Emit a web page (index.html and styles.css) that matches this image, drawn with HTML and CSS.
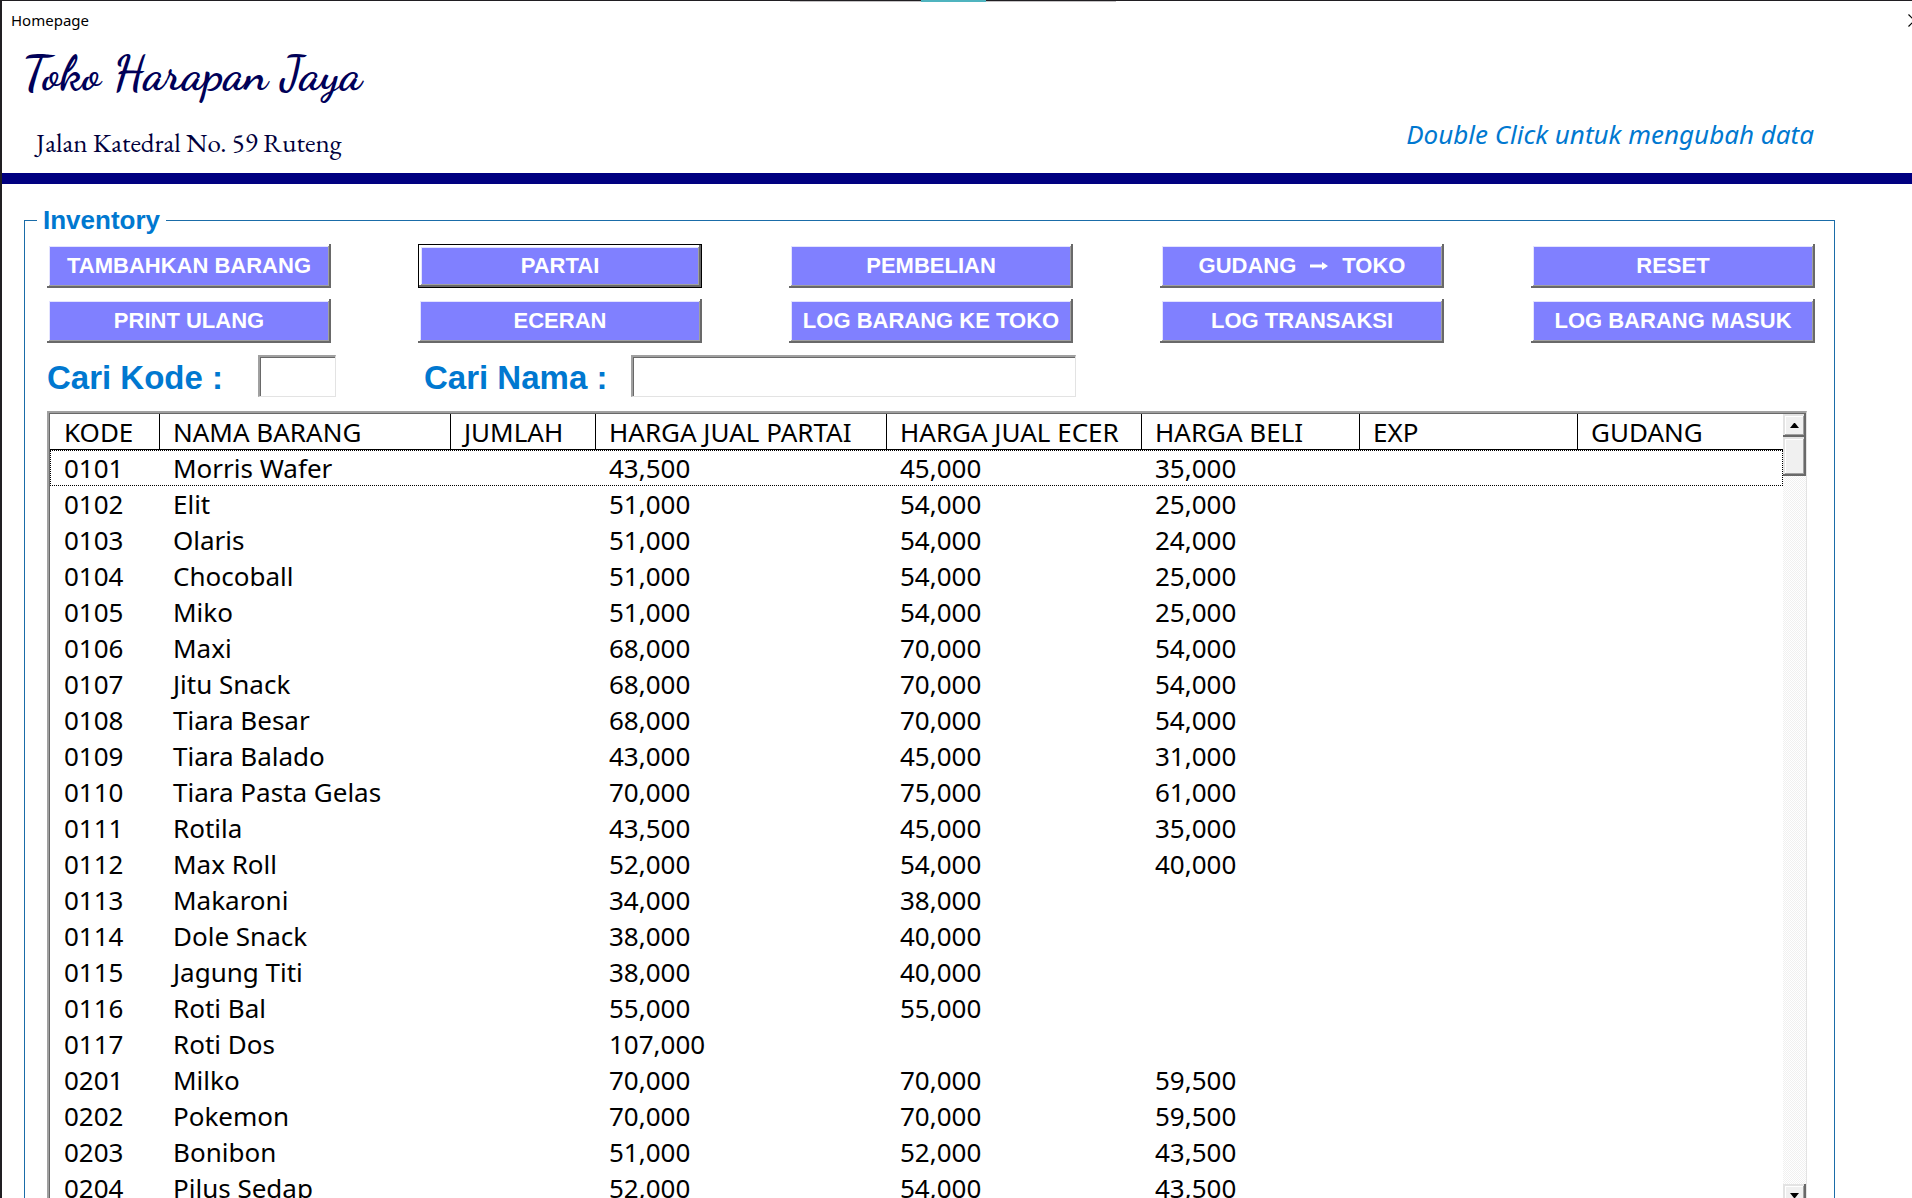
FILE: index.html
```html
<!DOCTYPE html>
<html lang="id">
<head>
<meta charset="utf-8">
<title>Homepage</title>
<link rel="stylesheet" href="styles.css">
</head>
<body>
<div class="window">
  <div class="edge" aria-hidden="true"><div class="edge-panel"><div class="edge-tab"></div></div></div>
  <div class="titlebar">
    <span>Homepage</span>
    <button class="close" type="button" aria-label="Tutup"><svg width="13" height="13" viewBox="0 0 13 13"><path d="M0.500 0.500 12.500 12.500M12.500 0.500 0.500 12.500" fill="none" stroke="#000" stroke-width="1.200"/></svg></button>
  </div>
  <header class="header">
    <div class="brand">
      <h1 class="brand-name">Toko Harapan Jaya</h1>
      <p class="brand-address">Jalan Katedral No. 59 Ruteng</p>
    </div>
    <p class="hint">Double Click untuk mengubah data</p>
  </header>

  <fieldset class="inventory">
    <legend>Inventory</legend>
    <div class="actions">
      <button type="button">TAMBAHKAN BARANG</button>
      <button type="button" class="is-default">PARTAI</button>
      <button type="button">PEMBELIAN</button>
      <button type="button">GUDANG <svg class="arrow" width="18" height="8" viewBox="0 0 18 8" role="img" aria-label="ke"><path d="M0 2.500h12V0l6 4-6 4V5.500H0z" fill="#fff"/></svg> TOKO</button>
      <button type="button">RESET</button>
      <button type="button">PRINT ULANG</button>
      <button type="button">ECERAN</button>
      <button type="button">LOG BARANG KE TOKO</button>
      <button type="button">LOG TRANSAKSI</button>
      <button type="button">LOG BARANG MASUK</button>
    </div>
    <div class="search">
      <div class="field field-code"><label for="kode">Cari Kode :</label><input id="kode" type="text"></div>
      <div class="field field-name"><label for="nama">Cari Nama :</label><input id="nama" type="text"></div>
    </div>
    <div class="list">
      <div class="list-body">
        <table>
          <colgroup><col class="c-code"><col class="c-name"><col class="c-qty"><col class="c-name"><col class="c-retail"><col class="c-mid"><col class="c-mid"><col></colgroup>
          <thead><tr><th>KODE</th><th>NAMA BARANG</th><th>JUMLAH</th><th>HARGA JUAL PARTAI</th><th>HARGA JUAL ECER</th><th>HARGA BELI</th><th>EXP</th><th>GUDANG</th></tr></thead>
          <tbody>
            <tr class="focused"><td>0101</td><td>Morris Wafer</td><td></td><td>43,500</td><td>45,000</td><td>35,000</td><td></td><td></td></tr>
            <tr><td>0102</td><td>Elit</td><td></td><td>51,000</td><td>54,000</td><td>25,000</td><td></td><td></td></tr>
            <tr><td>0103</td><td>Olaris</td><td></td><td>51,000</td><td>54,000</td><td>24,000</td><td></td><td></td></tr>
            <tr><td>0104</td><td>Chocoball</td><td></td><td>51,000</td><td>54,000</td><td>25,000</td><td></td><td></td></tr>
            <tr><td>0105</td><td>Miko</td><td></td><td>51,000</td><td>54,000</td><td>25,000</td><td></td><td></td></tr>
            <tr><td>0106</td><td>Maxi</td><td></td><td>68,000</td><td>70,000</td><td>54,000</td><td></td><td></td></tr>
            <tr><td>0107</td><td>Jitu Snack</td><td></td><td>68,000</td><td>70,000</td><td>54,000</td><td></td><td></td></tr>
            <tr><td>0108</td><td>Tiara Besar</td><td></td><td>68,000</td><td>70,000</td><td>54,000</td><td></td><td></td></tr>
            <tr><td>0109</td><td>Tiara Balado</td><td></td><td>43,000</td><td>45,000</td><td>31,000</td><td></td><td></td></tr>
            <tr><td>0110</td><td>Tiara Pasta Gelas</td><td></td><td>70,000</td><td>75,000</td><td>61,000</td><td></td><td></td></tr>
            <tr><td>0111</td><td>Rotila</td><td></td><td>43,500</td><td>45,000</td><td>35,000</td><td></td><td></td></tr>
            <tr><td>0112</td><td>Max Roll</td><td></td><td>52,000</td><td>54,000</td><td>40,000</td><td></td><td></td></tr>
            <tr><td>0113</td><td>Makaroni</td><td></td><td>34,000</td><td>38,000</td><td></td><td></td><td></td></tr>
            <tr><td>0114</td><td>Dole Snack</td><td></td><td>38,000</td><td>40,000</td><td></td><td></td><td></td></tr>
            <tr><td>0115</td><td>Jagung Titi</td><td></td><td>38,000</td><td>40,000</td><td></td><td></td><td></td></tr>
            <tr><td>0116</td><td>Roti Bal</td><td></td><td>55,000</td><td>55,000</td><td></td><td></td><td></td></tr>
            <tr><td>0117</td><td>Roti Dos</td><td></td><td>107,000</td><td></td><td></td><td></td><td></td></tr>
            <tr><td>0201</td><td>Milko</td><td></td><td>70,000</td><td>70,000</td><td>59,500</td><td></td><td></td></tr>
            <tr><td>0202</td><td>Pokemon</td><td></td><td>70,000</td><td>70,000</td><td>59,500</td><td></td><td></td></tr>
            <tr><td>0203</td><td>Bonibon</td><td></td><td>51,000</td><td>52,000</td><td>43,500</td><td></td><td></td></tr>
            <tr><td>0204</td><td>Pilus Sedap</td><td></td><td>52,000</td><td>54,000</td><td>43,500</td><td></td><td></td></tr>
          </tbody>
        </table>
      </div>
      <div class="scrollbar">
        <button type="button" class="scroll-button" aria-label="Gulir ke atas"><svg width="9" height="5" viewBox="0 0 9 5"><path d="M4 0h1l4 5H0z"/></svg></button>
        <div class="thumb"></div>
        <button type="button" class="scroll-button scroll-down" aria-label="Gulir ke bawah"><svg width="9" height="5" viewBox="0 0 9 5"><path d="M0 0h9L5 5H4z"/></svg></button>
      </div>
    </div>
  </fieldset>
</div>
</body>
</html>
```
FILE: styles.css
```css
* {
  box-sizing: border-box;
}

body {
  margin: 0;
  height: 100vh;
  overflow: hidden;
  background: #fff;
  color: #000;
  font-family: "Noto Sans", "Open Sans", sans-serif;
}

h1,
p {
  margin: 0;
}

/* The form is taller than the screen and runs off its bottom edge. */
.window {
  display: flex;
  flex-direction: column;
  height: calc(100vh + 19px);
  border-left: 2px solid #201e22;
}

.edge {
  display: flex;
  justify-content: center;
  flex: none;
  height: 1px;
  padding-right: 8px;
  background: #201e22;
}

.edge-panel {
  display: flex;
  justify-content: center;
  width: 326px;
  height: 2px;
  border-bottom: 1px solid #c4c2c4;
}

.edge-tab {
  width: 65px;
  height: 2px;
  background: #4fb4bf;
}

.titlebar {
  display: flex;
  justify-content: space-between;
  align-items: center;
  flex: none;
  height: 38px;
  padding-left: 9px;
  font-size: 15px;
}

/* Only the left part of the close cross fits on the screen. */
.close {
  display: flex;
  flex: none;
  width: 4px;
  padding: 0;
  border: 0;
  background: none;
}

.close svg {
  flex: none;
}

.header {
  display: flex;
  justify-content: space-between;
  flex: none;
  height: 145px;
  padding: 0 98px 0 20px;
  border-bottom: 11px solid #000080;
}

.brand-name {
  color: #000058;
  font: bold 48px/70px "Dancing Script", "Liberation Serif", cursive;
}

.brand-address {
  padding: 6px 0 0 14px;
  color: #00003c;
  font: 27px/56px "EB Garamond", "Liberation Serif", serif;
}

.hint {
  align-self: flex-end;
  padding-bottom: 21px;
  color: #0078d0;
  font-size: 26px;
  font-style: italic;
  line-height: 36px;
}

.inventory {
  display: flex;
  flex-direction: column;
  flex: 1;
  min-height: 0;
  min-width: 0;
  margin: 22px 77px 0 22px;
  padding: 10px 19px 8px 22px;
  border: 1px solid #1a6ca8;
  color: #0078d0;
  font-family: "Liberation Sans", sans-serif;
}

.inventory legend {
  margin-left: -10px;
  padding: 0 6px;
  font-size: 26px;
  font-weight: bold;
  line-height: 28px;
}

.actions {
  display: grid;
  grid-template-columns: repeat(5, 1fr);
  gap: 11px 87px;
}

.actions button {
  display: flex;
  justify-content: center;
  align-items: center;
  gap: 14px;
  height: 44px;
  padding: 0;
  border: 0;
  background: #8080ff;
  box-shadow: inset -2px -2px #696969, inset 2px 2px #fff, inset -3px -3px #a0a0a0, inset 3px 3px #e3e3ff;
  color: #fff;
  font: bold 22px/26px "Liberation Sans", sans-serif;
  white-space: nowrap;
}

.actions .is-default {
  border: 1px solid #000;
}

.search {
  display: flex;
  gap: 88px;
  margin-top: 12px;
  padding-right: 739px;
}

.field {
  display: flex;
  flex: none;
  justify-content: space-between;
  align-items: center;
  width: 289px;
  font-size: 33px;
  font-weight: bold;
}

.field label {
  padding-top: 3px;
}

.field-name {
  flex: 1;
  gap: 24px;
}

.field input {
  width: 78px;
  height: 42px;
  padding: 0 6px;
  border: 1px solid #e3e3e3;
  border-top: 2px solid #a0a0a0;
  border-left: 2px solid #a0a0a0;
  border-radius: 0;
  outline: 0;
  box-shadow: inset 1px 1px #696969;
  font: 26px "Noto Sans", sans-serif;
}

.field-name input {
  flex: 1;
}

.list {
  display: flex;
  flex: 1;
  min-height: 0;
  margin: 14px 8px 0 0;
  padding: 1px 0 0 1px;
  border: 1px solid #e3e3e3;
  border-top: 2px solid #a0a0a0;
  border-left: 2px solid #a0a0a0;
  box-shadow: inset 1px 1px #696969;
}

.list-body {
  flex: 1;
  overflow: hidden;
}

table {
  width: 100%;
  table-layout: fixed;
  border-collapse: separate;
  border-spacing: 0;
  color: #000;
  font: 26px/36px "Noto Sans", "Open Sans", sans-serif;
}

th,
td {
  height: 36px;
  padding: 0 0 0 13px;
  font-weight: normal;
  text-align: left;
  white-space: nowrap;
}

th {
  padding-top: 2px;
  border-right: 1px solid #000;
  border-bottom: 1px solid #000;
  line-height: 33px;
}

th:last-child {
  border-right: 0;
}

th:first-child,
td:first-child {
  padding-left: 14px;
}

.focused {
  outline: 1px dotted #000;
  outline-offset: -1px;
}

.c-code {
  width: 110px;
}

.c-name {
  width: 291px;
}

.c-qty {
  width: 145px;
}

.c-retail {
  width: 255px;
}

.c-mid {
  width: 218px;
}

.scrollbar {
  display: flex;
  flex-direction: column;
  width: 23px;
  background: repeating-conic-gradient(#f0f0f0 0 25%, #fff 0 50%) 0 0 / 2px 2px;
}

.scroll-button,
.thumb {
  flex: none;
  width: 23px;
  height: 23px;
  padding: 0;
  border: 0;
  background: #f0f0f0;
  box-shadow: inset -2px -2px #696969, inset 2px 2px #e3e3e3, inset -3px -3px #a0a0a0, inset 3px 3px #fff;
}

.scroll-button {
  display: flex;
  justify-content: center;
  align-items: center;
}

.thumb {
  height: 39px;
}

.scroll-down {
  margin-top: auto;
}
```
